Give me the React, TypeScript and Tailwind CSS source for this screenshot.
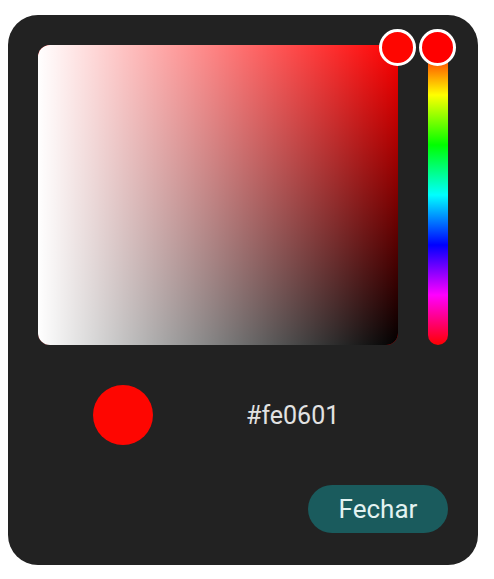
import React from 'react';

const hex = '#fe0601';

export default function App() {
    return (
        <div className="min-h-[579px] bg-white pt-[15px] pl-[8px] font-['Roboto',sans-serif]">
            <div className="flex h-[550px] w-[470px] flex-col rounded-[30px] bg-[#222222] p-[30px]">
                {/* Picker area */}
                <div className="flex gap-[30px]">
                    <div className="relative h-[300px] w-[360px] rounded-[12px] bg-[#ff0000]">
                        <div className="absolute inset-0 rounded-[12px] bg-[linear-gradient(to_top,#000000,rgba(0,0,0,0))]" />
                        <div className="absolute inset-0 rounded-[12px] bg-[linear-gradient(to_right,#ffffff,rgba(255,255,255,0))]" />
                        <div className="absolute left-[341px] top-[-16px] h-[37px] w-[37px] rounded-full border-[3px] border-white bg-[#fe0601]" />
                    </div>
                    <div className="relative h-[300px] w-[20px] rounded-full bg-[linear-gradient(to_bottom,#ff0000,#ffff00,#00ff00,#00ffff,#0000ff,#ff00ff,#ff0000)]">
                        <div className="absolute left-[-9px] top-[-16px] h-[37px] w-[37px] rounded-full border-[3px] border-white bg-[#ff0000]" />
                    </div>
                </div>

                {/* Preview row */}
                <div className="mt-[40px] flex h-[60px] items-center">
                    <div className="ml-[55px] h-[60px] w-[60px] rounded-full" style={{ backgroundColor: hex }} />
                    <span className="ml-[93px] text-[25px] leading-none text-[#e2e2e2]">{hex}</span>
                </div>

                <div className="mt-[40px] flex justify-end">
                    <button className="h-[48px] w-[140px] rounded-full bg-[#1a5b5d] text-[26px] leading-none text-[#e3f2f1]">
                        Fechar
                    </button>
                </div>
            </div>
        </div>
    );
}
